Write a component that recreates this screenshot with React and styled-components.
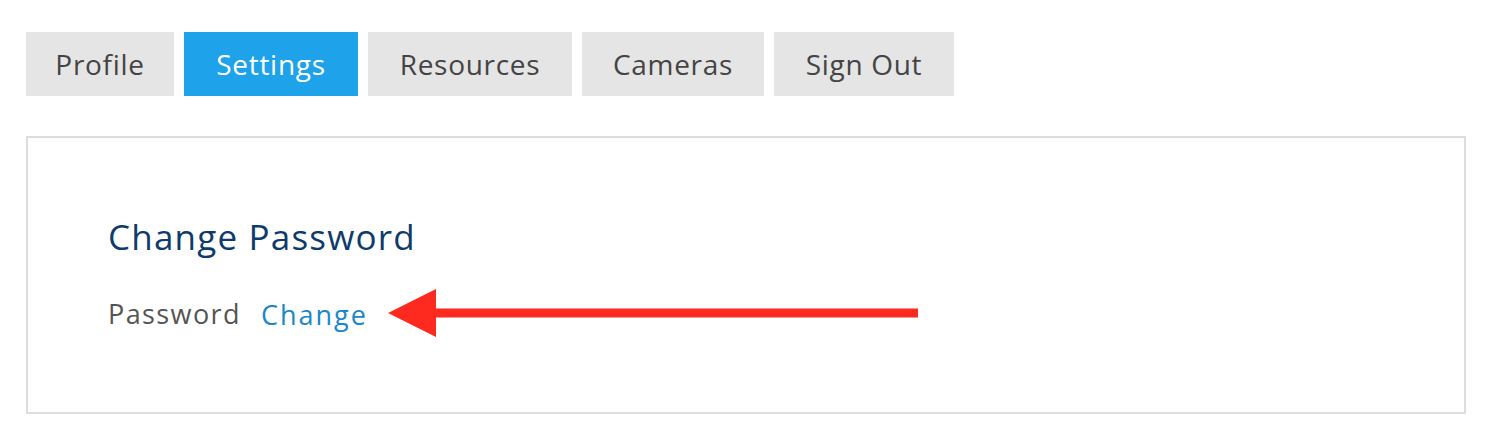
import React from "react";
import styled, { createGlobalStyle } from "styled-components";

const Global = createGlobalStyle`
  html, body { margin: 0; padding: 0; background: #fff; }
  body { font-family: "Open Sans", "Liberation Sans", sans-serif; }
`;

const Page = styled.div`
  padding: 32px 30px 0 26px;
`;

const Tabs = styled.nav`
  display: flex;
  gap: 10px;
`;

const Tab = styled.a`
  display: flex;
  align-items: center;
  justify-content: center;
  width: ${(p) => p.$width}px;
  height: 64px;
  font-size: 28px;
  letter-spacing: 0.7px;
  color: ${(p) => (p.$active ? "#ffffff" : "#444444")};
  background: ${(p) => (p.$active ? "#1ea2ea" : "#e5e5e5")};
  text-decoration: none;
  box-sizing: border-box;
`;

const Panel = styled.section`
  margin-top: 40px;
  width: 1440px;
  height: 278px;
  box-sizing: border-box;
  border: 2px solid #dddddd;
  padding: 79px 0 0 80px;
`;

const Heading = styled.h2`
  margin: 0;
  font-weight: 400;
  font-size: 35px;
  line-height: 40px;
  letter-spacing: 1.2px;
  color: #0f3b6c;
`;

const Row = styled.div`
  display: flex;
  align-items: center;
  margin-top: 29px;
  height: 54px;
`;

const Label = styled.span`
  font-size: 27px;
  color: #555555;
  letter-spacing: 1.4px;
`;

const Link = styled.a`
  margin-left: 20px;
  font-size: 27px;
  color: #1b87c9;
  letter-spacing: 2px;
  text-decoration: none;
  position: relative;
  top: 1px;
`;

const Arrow = styled.svg`
  margin-left: 18px;
  flex: none;
`;

const tabs = [
  { label: "Profile", width: 148 },
  { label: "Settings", width: 174 },
  { label: "Resources", width: 204 },
  { label: "Cameras", width: 182 },
  { label: "Sign Out", width: 180 },
];

export default function App() {
  return (
    <>
      <Global />
      <Page>
        <Tabs>
          {tabs.map((t) => (
            <Tab key={t.label} $width={t.width} $active={t.label === "Settings"}>
              {t.label}
            </Tab>
          ))}
        </Tabs>
        <Panel>
          <Heading>Change Password</Heading>
          <Row>
            <Label>Password</Label>
            <Link>Change</Link>
            <Arrow width="532" height="52" viewBox="0 0 532 52">
              <polygon points="2,26 50,2 50,50" fill="#ff2a1f" />
              <rect x="48" y="21.5" width="484" height="9" fill="#ff2a1f" />
            </Arrow>
          </Row>
        </Panel>
      </Page>
    </>
  );
}
